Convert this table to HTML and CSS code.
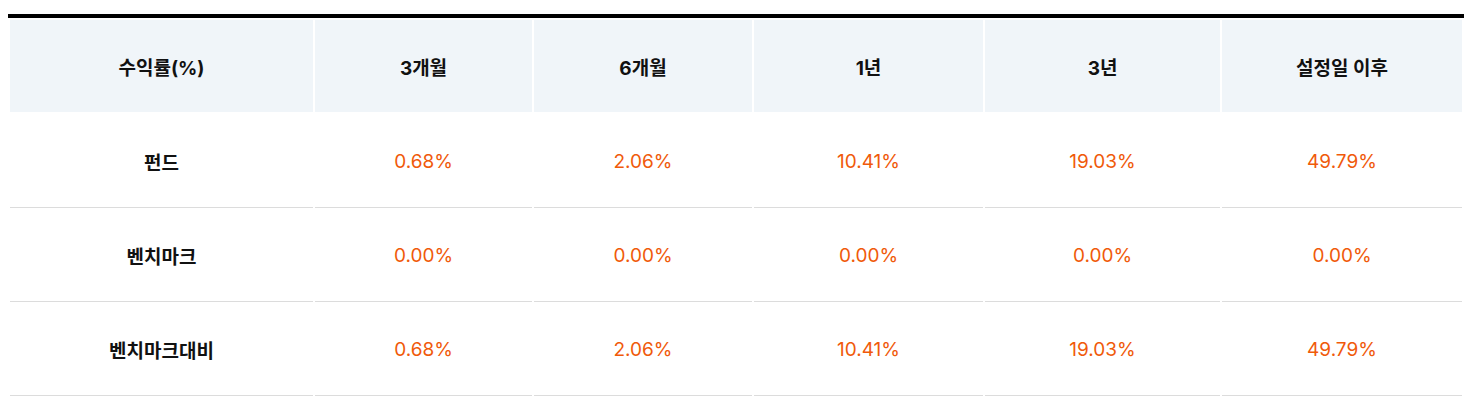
FILE: index.html
```html
<!DOCTYPE html>
<html lang="ko">
<head>
<meta charset="utf-8">
<link rel="stylesheet" href="styles.css">
</head>
<body>
<table class="returns">
  <colgroup>
    <col class="c1"><col class="c2"><col class="c3"><col class="c4"><col class="c5"><col class="c6">
  </colgroup>
  <thead>
    <tr>
      <th>수익률(%)</th>
      <th>3개월</th>
      <th>6개월</th>
      <th>1년</th>
      <th>3년</th>
      <th>설정일 이후</th>
    </tr>
  </thead>
  <tbody>
    <tr>
      <th>펀드</th>
      <td>0.68%</td>
      <td>2.06%</td>
      <td>10.41%</td>
      <td>19.03%</td>
      <td>49.79%</td>
    </tr>
    <tr>
      <th>벤치마크</th>
      <td>0.00%</td>
      <td>0.00%</td>
      <td>0.00%</td>
      <td>0.00%</td>
      <td>0.00%</td>
    </tr>
    <tr>
      <th>벤치마크대비</th>
      <td>0.68%</td>
      <td>2.06%</td>
      <td>10.41%</td>
      <td>19.03%</td>
      <td>49.79%</td>
    </tr>
  </tbody>
</table>
</body>
</html>
```

FILE: styles.css
```css
html, body {
  background: #fff;
}
body {
  margin: 14px 6px 0 8px;
  font-family: "Inter", "Noto Sans CJK KR", sans-serif;
}
.returns {
  width: 100%;
  table-layout: fixed;
  border-collapse: separate;
  border-spacing: 2px;
  border-top: 4px solid #000;
}
.c1 { width: 303px; }
.c2 { width: 217px; }
.c3 { width: 218px; }
.c4 { width: 229px; }
.c5 { width: 235px; }
.c6 { width: 240px; }
.returns thead th {
  height: 92px;
  padding: 0;
  background: #f0f5f9;
  border-bottom: 2px solid #fff;
  font-size: 19px;
  font-weight: 700;
  color: #111;
  text-align: center;
  vertical-align: middle;
}
.returns tbody th,
.returns tbody td {
  height: 91px;
  padding: 0;
  border-bottom: 1px solid #dcdcdc;
  text-align: center;
  vertical-align: middle;
  font-size: 19px;
}
.returns tbody th {
  font-weight: 700;
  color: #111;
}
.returns tbody td {
  font-weight: 400;
  color: #f05a0a;
}
```
